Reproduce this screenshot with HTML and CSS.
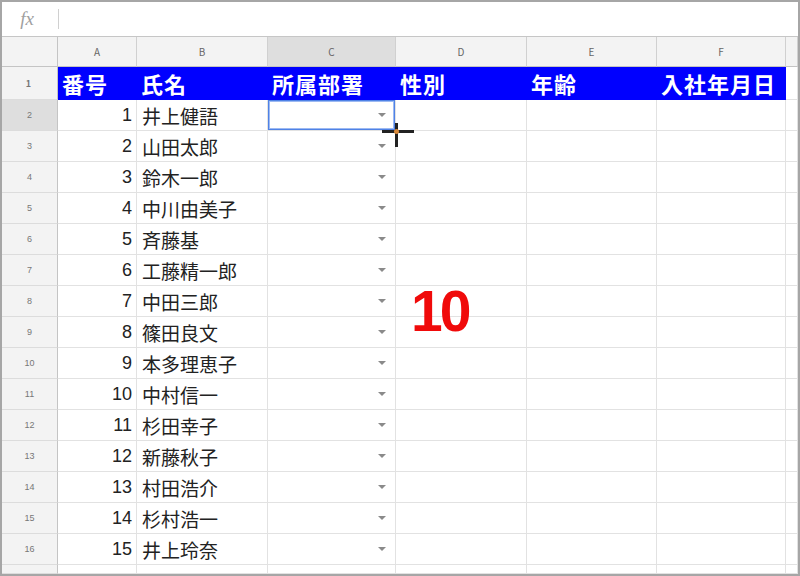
FILE: index.html
```html
<!DOCTYPE html>
<html lang="ja">
<head>
    <meta charset="UTF-8">
    <title>シート</title>
    <link rel="stylesheet" href="styles.css">
</head>
<body>
    <div class="sheet">
        <!-- 数式バー -->
        <div class="formula-bar">
            <span class="fx">fx</span>
            <span class="sep"></span>
        </div>

        <!-- 列見出し -->
        <div class="row col-head">
            <div class="corner"></div>
            <div>A</div><div>B</div><div class="active">C</div><div>D</div><div>E</div><div>F</div><div></div>
        </div>

        <!-- 見出し行 -->
        <div class="row title-row">
            <div class="rh">1</div>
            <div>番号</div><div>氏名</div><div>所属部署</div><div>性別</div><div>年齢</div><div>入社年月日</div><div class="blank"></div>
        </div>

        <div class="row"><div class="rh active">2</div><div class="num">1</div><div>井上健語</div><div class="dd selected"></div><div></div><div></div><div></div><div></div></div>
        <div class="row"><div class="rh">3</div><div class="num">2</div><div>山田太郎</div><div class="dd"></div><div></div><div></div><div></div><div></div></div>
        <div class="row"><div class="rh">4</div><div class="num">3</div><div>鈴木一郎</div><div class="dd"></div><div></div><div></div><div></div><div></div></div>
        <div class="row"><div class="rh">5</div><div class="num">4</div><div>中川由美子</div><div class="dd"></div><div></div><div></div><div></div><div></div></div>
        <div class="row"><div class="rh">6</div><div class="num">5</div><div>斉藤基</div><div class="dd"></div><div></div><div></div><div></div><div></div></div>
        <div class="row"><div class="rh">7</div><div class="num">6</div><div>工藤精一郎</div><div class="dd"></div><div></div><div></div><div></div><div></div></div>
        <div class="row"><div class="rh">8</div><div class="num">7</div><div>中田三郎</div><div class="dd"></div><div></div><div></div><div></div><div></div></div>
        <div class="row"><div class="rh">9</div><div class="num">8</div><div>篠田良文</div><div class="dd"></div><div></div><div></div><div></div><div></div></div>
        <div class="row"><div class="rh">10</div><div class="num">9</div><div>本多理恵子</div><div class="dd"></div><div></div><div></div><div></div><div></div></div>
        <div class="row"><div class="rh">11</div><div class="num">10</div><div>中村信一</div><div class="dd"></div><div></div><div></div><div></div><div></div></div>
        <div class="row"><div class="rh">12</div><div class="num">11</div><div>杉田幸子</div><div class="dd"></div><div></div><div></div><div></div><div></div></div>
        <div class="row"><div class="rh">13</div><div class="num">12</div><div>新藤秋子</div><div class="dd"></div><div></div><div></div><div></div><div></div></div>
        <div class="row"><div class="rh">14</div><div class="num">13</div><div>村田浩介</div><div class="dd"></div><div></div><div></div><div></div><div></div></div>
        <div class="row"><div class="rh">15</div><div class="num">14</div><div>杉村浩一</div><div class="dd"></div><div></div><div></div><div></div><div></div></div>
        <div class="row"><div class="rh">16</div><div class="num">15</div><div>井上玲奈</div><div class="dd"></div><div></div><div></div><div></div><div></div></div>
        <div class="row last"><div class="rh"></div><div></div><div></div><div></div><div></div><div></div><div></div><div></div></div>

        <!-- 注釈とカーソル -->
        <div class="big-num">10</div>
        <div class="cursor"><span class="h"></span><span class="v"></span><span class="dot"></span></div>
    </div>
</body>
</html>
```

FILE: styles.css
```css
/* 全体 */
* {
    box-sizing: border-box;
}

body {
    margin: 0;
    font-family: "Liberation Sans", "Noto Sans CJK JP", sans-serif;
    background: #fff;
}

.sheet {
    position: relative;
    width: 800px;
    height: 576px;
    border: 2px solid #a6a6a6;
    overflow: hidden;
    background: #fff;
}

/* 数式バー */
.formula-bar {
    height: 35px;
    border-bottom: 1px solid #c6c6c6;
    display: flex;
    align-items: center;
}

.fx {
    width: 56px;
    text-align: center;
    font-family: "Liberation Serif", serif;
    font-style: italic;
    font-size: 19px;
    color: #a0a0a0;
    padding-right: 6px;
}

.sep {
    width: 1px;
    height: 20px;
    background: #d0d0d0;
}

/* 行 */
.row {
    display: grid;
    grid-template-columns: 56px 79px 131px 128px 131px 130px 129px 1fr;
    height: 31px;
}

.row > div {
    border-right: 1px solid #e2e2e2;
    border-bottom: 1px solid #e2e2e2;
    display: flex;
    align-items: center;
    padding: 0 5px;
    font-size: 19px;
    color: #222;
    white-space: nowrap;
    overflow: hidden;
}

.row > .num {
    justify-content: flex-end;
    font-size: 18px;
    padding-right: 4px;
}

/* 行番号 */
.row > .rh {
    background: #f3f3f3;
    border-right: 1px solid #c4c4c4;
    border-bottom: 1px solid #dcdcdc;
    justify-content: center;
    font-size: 9px;
    color: #777;
}

.row > .rh.active {
    background: #dedede;
}

/* 列見出し */
.col-head {
    height: 30px;
}

.col-head > div {
    background: #f3f3f3;
    border-right: 1px solid #d0d0d0;
    border-bottom: 1px solid #c4c4c4;
    justify-content: center;
    font-size: 10px;
    color: #666;
}

.col-head > .corner {
    border-right: 1px solid #c4c4c4;
}

.col-head > .active {
    background: #dedede;
}

/* 見出し行 */
.title-row {
    height: 33px;
}

.title-row > div {
    background: #0000ff;
    border-right-color: #0000ff;
    border-bottom-color: #0000ff;
    color: #fff;
    font-family: "Noto Sans CJK JP", sans-serif;
    font-weight: bold;
    font-size: 22px;
    padding-left: 4px;
    letter-spacing: 1px;
}

.title-row > .blank {
    background: #fff;
    border-bottom-color: #e2e2e2;
    border-right-color: #e2e2e2;
}

.row > div:not(.rh):not(.num) {
    font-family: "Noto Sans CJK JP", sans-serif;
}

/* プルダウン */
.dd {
    position: relative;
}

.dd::after {
    content: "";
    position: absolute;
    right: 9px;
    top: 13px;
    border-left: 4px solid transparent;
    border-right: 4px solid transparent;
    border-top: 4px solid #8a8a8a;
}

.row > .selected {
    box-shadow: inset 0 0 0 1px #4f82e6, inset 0 0 0 2px #9cb9f2;
}

.last {
    height: 9px;
}

/* 注釈 */
.big-num {
    position: absolute;
    left: 409px;
    top: 276px;
    font-family: "Liberation Sans", sans-serif;
    font-weight: bold;
    font-size: 57px;
    letter-spacing: -3px;
    color: #f00a0a;
}

/* マウスカーソル */
.cursor {
    position: absolute;
    left: 394px;
    top: 129px;
}

.cursor .h {
    position: absolute;
    left: -14px;
    top: -1px;
    width: 32px;
    height: 3px;
    background: #222;
}

.cursor .v {
    position: absolute;
    left: -1px;
    top: -8px;
    width: 3px;
    height: 24px;
    background: #222;
}

.cursor .dot {
    position: absolute;
    left: -2px;
    top: -2px;
    width: 5px;
    height: 5px;
    border-radius: 50%;
    background: #d98a3a;
}
```
